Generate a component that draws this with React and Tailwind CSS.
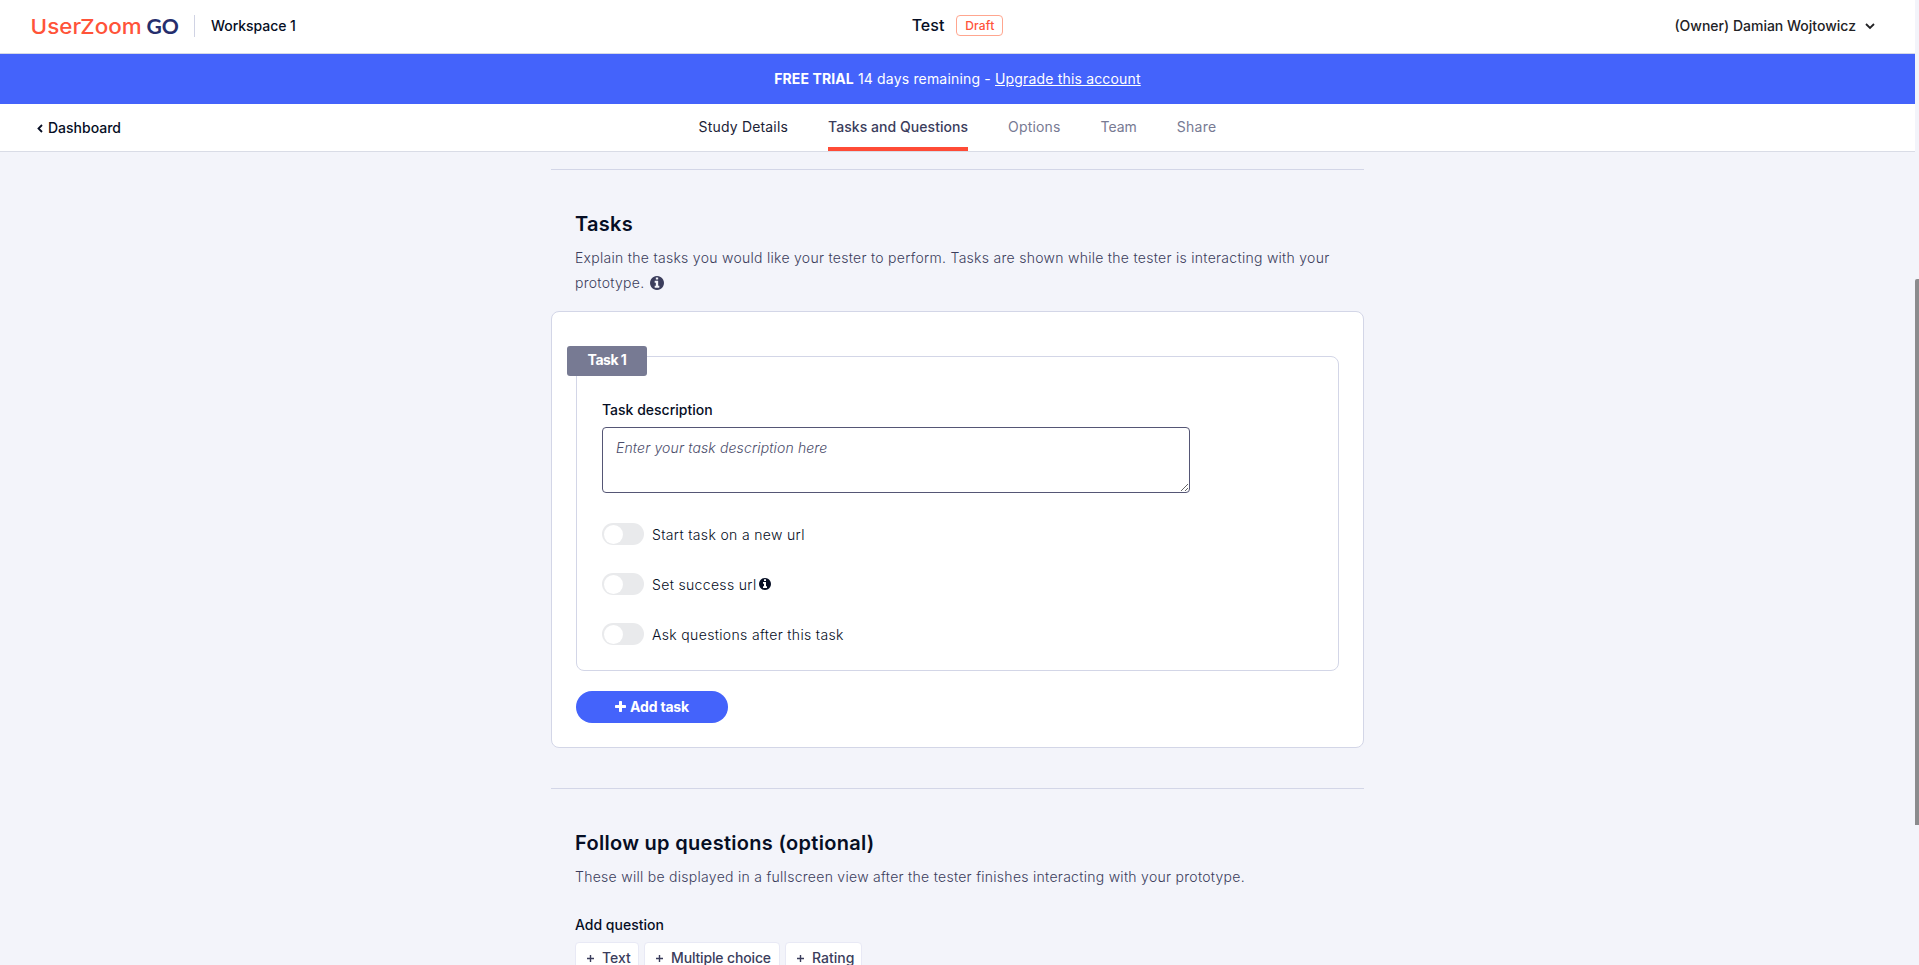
function InfoIcon({ className }) {
  return (
    <svg viewBox="0 0 1536 1536" className={className} fill="currentColor" fillRule="evenodd">
      <path d="M1024 1248v-160q0-14-9-23t-23-9h-96V544q0-14-9-23t-23-9H544q-14 0-23 9t-9 23v160q0 14 9 23t23 9h96v320h-96q-14 0-23 9t-9 23v160q0 14 9 23t23 9h448q14 0 23-9t9-23zM896 352V192q0-14-9-23t-23-9H672q-14 0-23 9t-9 23v160q0 14 9 23t23 9h192q14 0 23-9t9-23zm640 416q0 209-103 385.500t-279.500 279.500-385.500 103-385.500-103-279.500-279.500-103-385.500 103-385.500 279.500-279.500 385.500-103 385.500 103 279.500 279.500 103 385.500z" />
    </svg>
  );
}

function PlusIcon({ className }) {
  return (
    <svg viewBox="0 0 1408 1408" className={className} fill="currentColor">
      <path d="M1408 608v192q0 40-28 68t-68 28H896v416q0 40-28 68t-68 28H608q-40 0-68-28t-28-68V896H96q-40 0-68-28T0 800V608q0-40 28-68t68-28h416V96q0-40 28-68t68-28h192q40 0 68 28t28 68v416h416q40 0 68 28t28 68z" />
    </svg>
  );
}

function Logo() {
  return (
    <svg width="160" height="40" viewBox="0 0 160 40" className="shrink-0" role="img" aria-label="UserZoom GO">
      <text x="0.6" y="26" fontSize="20.6" textLength="111" lengthAdjust="spacingAndGlyphs" className="fill-[#ff5339] font-['Inter',sans-serif] font-medium">
        UserZoom
      </text>
      <text x="116.4" y="26" fontSize="20.6" textLength="32.4" lengthAdjust="spacingAndGlyphs" className="fill-[#252e6d] font-['Lato',sans-serif] font-bold">
        GO
      </text>
    </svg>
  );
}

function Chevron({ className, points, w, h }) {
  return (
    <svg width={w} height={h} viewBox={`0 0 ${w} ${h}`} className={className} fill="none" stroke="currentColor" strokeWidth="1.8">
      <polyline points={points} />
    </svg>
  );
}

function Tab({ children, className }) {
  return <a className={`flex h-[47px] items-start pt-[13px] leading-5 ${className}`}>{children}</a>;
}

function Toggle({ label, info }) {
  return (
    <label className="flex h-[22px] items-center">
      <span className="flex h-[22px] w-[42px] items-center rounded-full bg-[#e9eaec] pl-[2px]">
        <span className="size-[19px] rounded-full bg-white" />
      </span>
      <span className="ml-2 font-light tracking-[0.34px] text-[#060e24]">{label}</span>
      {info && <InfoIcon className="ml-[2px] size-[12px] text-[#060e24]" />}
    </label>
  );
}

function AddButton({ label, className }) {
  return (
    <button className={`flex h-8 items-start rounded-[4px] border border-[#e8e9f5] bg-white pt-[5px] font-medium leading-5 text-[#3b3d5c] ${className}`}>
      <svg width="7" height="7" viewBox="0 0 7 7" className="mt-[7px] mr-[8px] ml-[11px] shrink-0" stroke="#3b3d5c" strokeWidth="1.4">
        <path d="M3.5 0v7M0 3.5h7" />
      </svg>
      {label}
    </button>
  );
}

export default function App() {
  return (
    <div className="flex h-[965px] w-full overflow-hidden bg-[#f3f4fa] font-['Inter',sans-serif] text-[14px] text-[#060e24]">
      <div className="flex min-w-0 flex-1 flex-col">
        <header className="grid h-[54px] shrink-0 grid-cols-[1fr_auto_1fr] items-start border-b border-[#d5d8e6] bg-white">
          <div className="flex pl-[30px] pt-[8px]">
            <Logo />
            <div className="mt-[7px] ml-[4px] h-[22px] w-px bg-[#d0d3e4]" />
            <span className="mt-[8px] ml-[16px] font-medium leading-5 tracking-[-0.05px]">Workspace 1</span>
          </div>
          <div className="flex pt-[15px]">
            <span className="text-[16px] font-medium leading-[21px]">Test</span>
            <span className="ml-[12px] flex h-[21px] w-[47px] items-center justify-center rounded-[4px] border border-[#ffa68f] text-[12px] font-medium tracking-[0.2px] text-[#ff5339]">
              Draft
            </span>
          </div>
          <div className="flex items-start justify-end pt-[16px] pr-[40px] font-medium text-[#222225]">
            <span className="leading-5">(Owner) Damian Wojtowicz</span>
            <Chevron className="mt-[7px] ml-[9px]" points="1,1 5,5 9,1" w={10} h={7} />
          </div>
        </header>

        <div className="flex h-[50px] shrink-0 justify-center bg-[#4463fb] pt-[15px] leading-5 text-white">
          <p className="whitespace-pre">
            <b className="font-bold tracking-[0.1px]">FREE TRIAL</b>
            <span className="tracking-[0.17px]"> 14 days remaining - </span>
            <a className="tracking-[0.17px] underline">Upgrade this account</a>
          </p>
        </div>

        <nav className="grid h-[48px] shrink-0 grid-cols-[1fr_auto_1fr] border-b border-[#d9dce6] bg-white">
          <div className="flex items-start pt-[14px] pl-[37px] font-medium">
            <Chevron className="mt-[6px] mr-[5px]" points="5,1 1.5,4.5 5,8" w={6} h={9} />
            <span className="leading-5">Dashboard</span>
          </div>
          <div className="flex gap-10">
            <Tab className="tracking-[0.17px] text-[#1b2236]">Study Details</Tab>
            <Tab className="border-b-4 border-[#ff4b36] font-medium tracking-[0.05px] text-[#3b3d5c]">Tasks and Questions</Tab>
            <Tab className="tracking-[0.15px] text-[#777a93]">Options</Tab>
            <Tab className="text-[#777a93]">Team</Tab>
            <Tab className="tracking-[0.25px] text-[#777a93]">Share</Tab>
          </div>
          <div />
        </nav>

        <main className="mx-auto flex w-[813px] flex-col">
          <hr className="mt-[17px] border-[#d3d6e7]" />
          <section className="px-6 pt-[40px]">
            <h2 className="text-[20px] font-semibold leading-7 tracking-[0.28px]">Tasks</h2>
            <p className="mt-[7px] leading-[25px] font-light tracking-[0.28px] text-[#3b3d5c]">
              Explain the tasks you would like your tester to perform. Tasks are shown while the tester is interacting with your
              prototype. <InfoIcon className="ml-px inline size-[14px] -translate-y-[1px] text-[#3b3d5c]" />
            </p>
          </section>

          <section className="mt-[16px] h-[437px] rounded-[8px] border border-[#d3d6e7] bg-white px-[24px] pt-[44px]">
            <div className="relative h-[315px] rounded-[8px] border border-[#d3d6e7] px-[25px] pt-[43px]">
              <span className="absolute -top-[11px] -left-[10px] flex h-[30px] w-[80px] justify-center rounded-[3px] bg-[#777a93] pt-[4px] leading-5 font-bold tracking-[-0.5px] text-white">
                Task 1
              </span>
              <label className="block font-medium leading-5">Task description</label>
              <textarea
                className="mt-[7px] block h-[66px] w-[588px] resize rounded-[4px] border border-[#555675] bg-white px-[13px] py-[10px] leading-5 font-light tracking-[0.14px] italic outline-none placeholder:text-[#4b4d6b]"
                placeholder="Enter your task description here"
              />
              <div className="mt-[30px] flex flex-col gap-7">
                <Toggle label="Start task on a new url" />
                <Toggle label="Set success url" info />
                <Toggle label="Ask questions after this task" />
              </div>
            </div>
            <button className="mt-[20px] flex h-[32px] w-[152px] items-center justify-center gap-[4px] rounded-full bg-[#4463fb] pb-px leading-5 font-bold tracking-[-0.2px] text-white">
              <PlusIcon className="size-[11px]" />
              Add task
            </button>
          </section>

          <hr className="mt-[40px] border-[#d3d6e7]" />
          <section className="px-6 pt-[40px]">
            <h2 className="text-[20px] font-semibold leading-7 tracking-[0.3px]">Follow up questions (optional)</h2>
            <p className="mt-[7px] whitespace-nowrap leading-[25px] font-light tracking-[0.28px] text-[#3b3d5c]">
              These will be displayed in a fullscreen view after the tester finishes interacting with your prototype.
            </p>
            <h3 className="mt-[26px] font-medium leading-5">Add question</h3>
            <div className="mt-[7px] flex gap-[5px]">
              <AddButton label="Text" className="w-[64px]" />
              <AddButton label="Multiple choice" className="w-[136px] tracking-[-0.15px] whitespace-nowrap" />
              <AddButton label="Rating" className="w-[77px]" />
            </div>
          </section>
        </main>
      </div>
      <div className="w-1 shrink-0 bg-[#f3f4fa] pt-[279px]">
        <div className="h-[546px] rounded-tl-[2px] bg-[#8b8b8d]" />
      </div>
    </div>
  );
}
